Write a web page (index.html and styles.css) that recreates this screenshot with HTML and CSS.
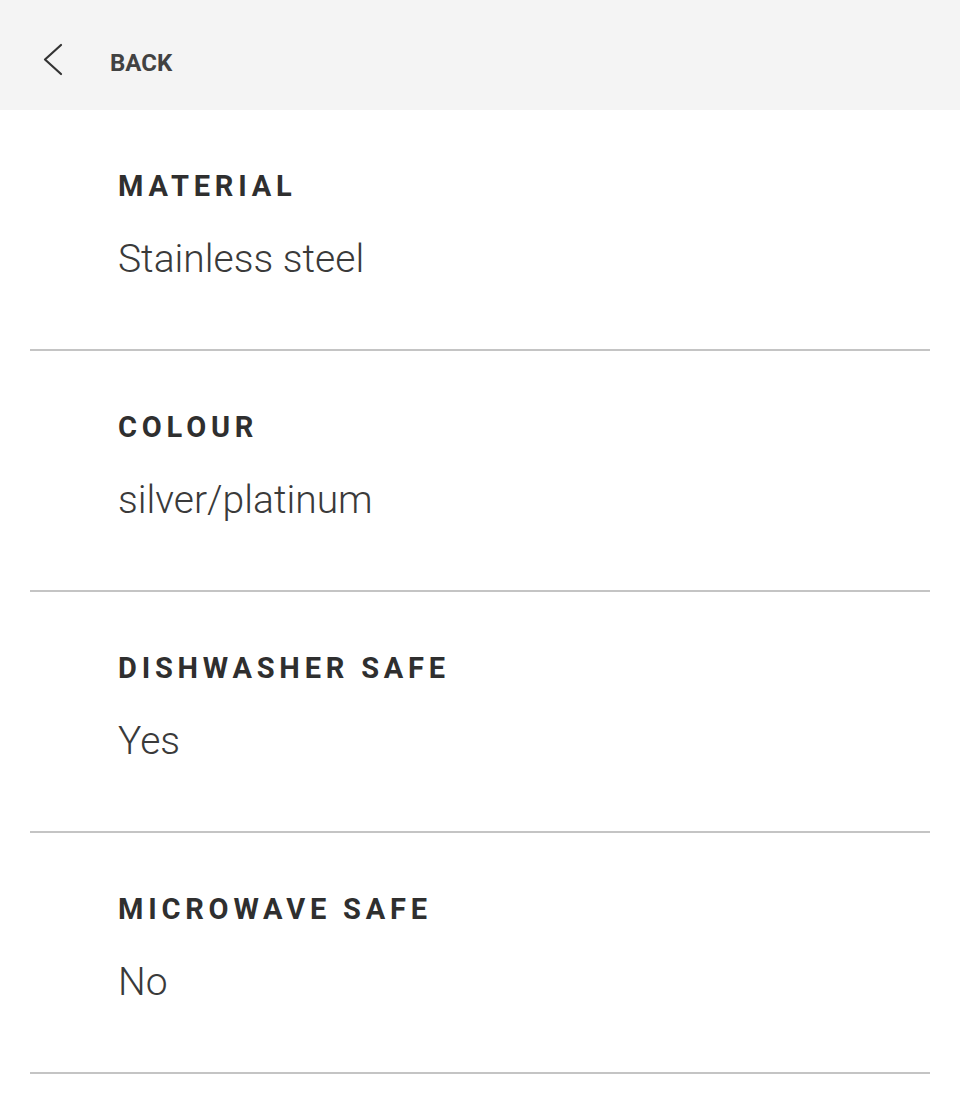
FILE: index.html
```html
<!DOCTYPE html>
<html lang="en">
<head>
<meta charset="utf-8">
<title>Product details</title>
<link rel="stylesheet" href="styles.css">
</head>
<body>
<header class="topbar">
  <a class="back" href="#">
    <svg class="back-icon" width="24" height="34" viewBox="0 0 24 34" aria-hidden="true">
      <polyline points="19,2 3,16.5 19,31" fill="none" stroke="#333" stroke-width="2.2" stroke-linecap="round" stroke-linejoin="round"/>
    </svg>
    <span class="back-label">BACK</span>
  </a>
</header>
<main class="specs">
  <section class="spec">
    <h2 class="spec-label">MATERIAL</h2>
    <p class="spec-value">Stainless steel</p>
  </section>
  <section class="spec">
    <h2 class="spec-label">COLOUR</h2>
    <p class="spec-value">silver/platinum</p>
  </section>
  <section class="spec">
    <h2 class="spec-label">DISHWASHER SAFE</h2>
    <p class="spec-value">Yes</p>
  </section>
  <section class="spec">
    <h2 class="spec-label">MICROWAVE SAFE</h2>
    <p class="spec-value">No</p>
  </section>
</main>
</body>
</html>
```
FILE: styles.css
```css
html, body {
  margin: 0;
  padding: 0;
  background: #ffffff;
  font-family: Roboto, "Liberation Sans", Arial, sans-serif;
}

.topbar {
  height: 110px;
  background: #f4f4f4;
  display: flex;
  align-items: center;
  padding: 10px 0 0 42px;
  box-sizing: border-box;
}

.back {
  display: flex;
  align-items: center;
  text-decoration: none;
  color: #424242;
}

.back-icon {
  display: block;
  margin-top: -1px;
}

.back-label {
  margin-left: 44px;
  font-size: 24px;
  font-weight: 700;
  line-height: 30px;
  margin-top: 5px;
}

.specs {
  margin: 0 30px;
}

.spec {
  padding: 58px 0 66px 88px;
  border-bottom: 2px solid #c4c4c4;
}

.spec-label {
  margin: 0;
  font-size: 29px;
  line-height: 36px;
  font-weight: 700;
  letter-spacing: 4.8px;
  color: #2f2f2f;
}

.spec-value {
  margin: 31px 0 0;
  font-size: 39px;
  line-height: 48px;
  font-weight: 300;
  color: #3a3a3a;
}
```
